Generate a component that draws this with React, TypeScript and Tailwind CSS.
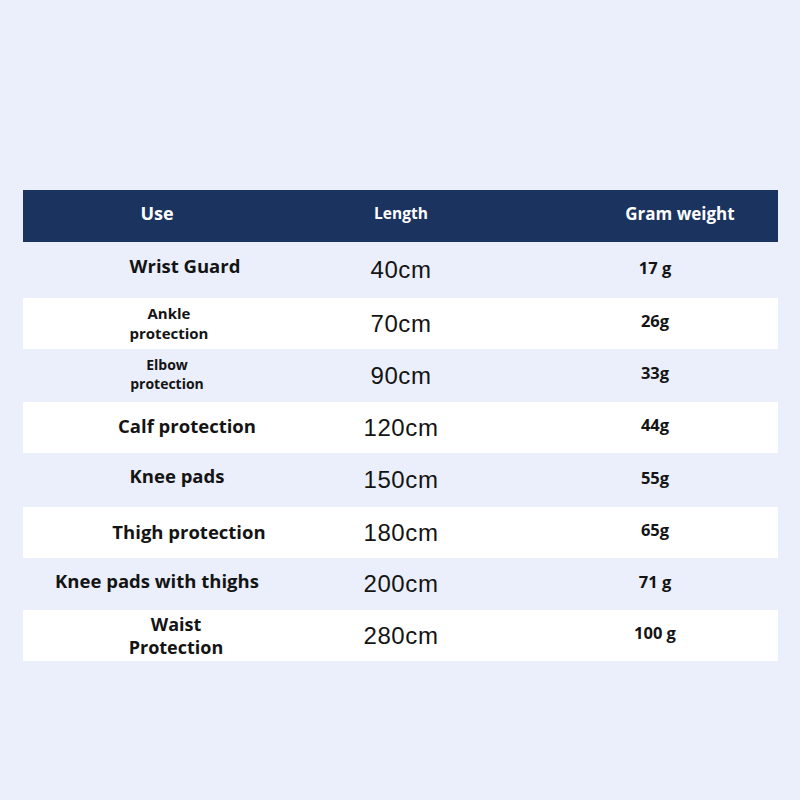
const rows = [
  { use: ["Wrist Guard"], size: "text-[18.5px]", pl: "pl-[56px]", shift: "pb-[8px]", len: "40cm", gram: "17 g", bg: "bg-transparent", h: "h-[56px]" },
  { use: ["Ankle", "protection"], size: "text-[15px] leading-[20px]", pl: "pl-[24px]", shift: "pb-[2px]", len: "70cm", gram: "26g", bg: "bg-white", h: "h-[51px]" },
  { use: ["Elbow", "protection"], size: "text-[14px] leading-[19px]", pl: "pl-[20px]", shift: "pb-[4px]", len: "90cm", gram: "33g", bg: "bg-transparent", h: "h-[53px]" },
  { use: ["Calf protection"], size: "text-[18.5px]", pl: "pl-[60px]", shift: "pb-[4px]", len: "120cm", gram: "44g", bg: "bg-white", h: "h-[51px]" },
  { use: ["Knee pads"], size: "text-[18.5px]", pl: "pl-[40px]", shift: "pb-[8px]", len: "150cm", gram: "55g", bg: "bg-transparent", h: "h-[54px]" },
  { use: ["Thigh protection"], size: "text-[18.5px]", pl: "pl-[64px]", shift: "pb-[2px]", len: "180cm", gram: "65g", bg: "bg-white", h: "h-[51px]" },
  { use: ["Knee pads with thighs"], size: "text-[18.5px] text-[#21163a]", pl: "pl-[0px]", shift: "pb-[6px]", len: "200cm", gram: "71 g", bg: "bg-transparent", h: "h-[52px]" },
  { use: ["Waist", "Protection"], size: "text-[18px] leading-[23px]", pl: "pl-[38px]", shift: "pb-[0px]", len: "280cm", gram: "100 g", bg: "bg-white", h: "h-[51px]" },
];

export default function App() {
  return (
    <div className="w-[800px] h-[800px] bg-[#eaeffb] pt-[190px] px-[23px] font-['Open_Sans','Noto_Sans',sans-serif]">
      <div className="w-[755px]">
        <div className="flex h-[52px] items-center bg-[#1b335f] text-white font-bold pb-[5px]">
          <div className="w-[268px] text-center text-[18px]">Use</div>
          <div className="w-[220px] text-center text-[15.5px]">Length</div>
          <div className="w-[267px] pl-[71px] text-center text-[17px]">Gram weight</div>
        </div>
        {rows.map((r) => (
          <div key={r.len} className={`flex items-center ${r.h} ${r.bg}`}>
            <div className={`w-[268px] ${r.pl} ${r.shift} text-center font-bold text-[#141414] ${r.size}`}>
              {r.use.map((l) => (
                <div key={l}>{l}</div>
              ))}
            </div>
            <div className="w-[220px] text-center text-[24px] tracking-[0.6px] text-[#141414] font-['Liberation_Sans',Arial,sans-serif]">
              {r.len}
            </div>
            <div className="w-[267px] pl-[21px] pb-[4px] text-center text-[16.5px] font-bold text-[#141414]">
              {r.gram}
            </div>
          </div>
        ))}
      </div>
    </div>
  );
}
